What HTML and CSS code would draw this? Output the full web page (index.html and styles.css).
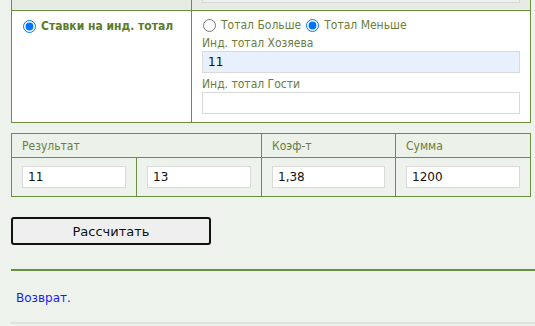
FILE: index.html
```html
<!DOCTYPE html>
<html lang="ru">
<head>
    <meta charset="UTF-8">
    <title>Калькулятор</title>
    <link rel="stylesheet" href="styles.css">
</head>
<body>
    <div class="page">
        <table class="bets">
            <tr class="top-row">
                <td class="left-col"></td>
                <td><div class="cut-input"></div></td>
            </tr>
            <tr>
                <td class="left-col">
                    <label class="title"><input type="radio" name="mode" checked> Ставки на инд. тотал</label>
                </td>
                <td class="right-col">
                    <div class="radios">
                        <label><input type="radio" name="tot"> Тотал Больше</label>
                        <label><input type="radio" name="tot" checked> Тотал Меньше</label>
                    </div>
                    <div class="field-label">Инд. тотал Хозяева</div>
                    <input type="text" class="field autofill" value="11">
                    <div class="field-label">Инд. тотал Гости</div>
                    <input type="text" class="field" value="">
                </td>
            </tr>
        </table>

        <table class="result">
            <tr class="head">
                <td colspan="2">Результат</td>
                <td>Коэф-т</td>
                <td>Сумма</td>
            </tr>
            <tr>
                <td class="c1"><input type="text" class="field" value="11"></td>
                <td class="c2"><input type="text" class="field" value="13"></td>
                <td class="c3"><input type="text" class="field" value="1,38"></td>
                <td class="c4"><input type="text" class="field" value="1200"></td>
            </tr>
        </table>

        <button class="calc">Рассчитать</button>

        <div class="footer">
            <a href="#">Возврат.</a>
        </div>
    </div>
</body>
</html>
```

FILE: styles.css
```css
body {
    margin: 0;
    background-color: #eef2ec;
    font-family: "DejaVu Sans Condensed", "DejaVu Sans", Verdana, sans-serif;
    font-size: 12px;
    color: #6b7d3c;
}
.page {
    width: 520px;
    margin-left: 11px;
}
table {
    border-collapse: collapse;
    width: 520px;
}
td {
    border: 1px solid #6a8f3e;
    padding: 0;
    vertical-align: top;
}
.bets {
    background-color: #fff;
}
.top-row td {
    height: 10px;
    background-color: #e6ebe4;
    border-top: none;
}
.cut-input {
    margin: 0 10px 0 10px;
    height: 2px;
    border: 1px solid #d8d8d8;
    border-top: none;
    background-color: #eef0ee;
}
.left-col {
    width: 179px;
}
.left-col .title {
    display: flex;
    align-items: center;
    margin: 8px 0 0 10px;
    font-weight: bold;
    color: #5c7a2b;
}
input[type="radio"] {
    margin: 0 5px 0 1px;
    width: 13px;
    height: 13px;
}
.right-col {
    padding: 7px 10px 8px 10px;
}
.radios {
    display: flex;
    gap: 4px;
}
.radios label {
    display: flex;
    align-items: center;
}
.field-label {
    margin-top: 4px;
    height: 15px;
}
.field {
    display: block;
    box-sizing: border-box;
    width: 100%;
    height: 22px;
    border: 1px solid #dadada;
    padding: 0 5px;
    font-family: "DejaVu Sans", Verdana, sans-serif;
    font-size: 12px;
    color: #111;
    background-color: #fff;
}
.field.autofill {
    background-color: #e8f0fe;
}
.result {
    margin-top: 10px;
}
.result td {
    padding: 8px 10px;
}
.result .head td {
    height: 23px;
    vertical-align: middle;
    padding: 0 10px;
    background-color: #ecf1ea;
}
.result .c1, .result .c2 {
    width: 104px;
}
.result .c3 {
    width: 113px;
}
.calc {
    display: block;
    margin-top: 20px;
    width: 200px;
    height: 28px;
    border: 2px solid #111;
    border-radius: 3px;
    background-color: #efefef;
    font-family: "DejaVu Sans", Verdana, sans-serif;
    font-size: 13px;
    color: #111;
}
.footer {
    margin-top: 24px;
    border-top: 2px solid #66903e;
    border-bottom: 2px solid #dfe2de;
    padding: 20px 5px 17px 5px;
    width: 515px;
}
.footer a {
    color: #1a1aff;
    text-decoration: none;
    font-family: "DejaVu Sans", Verdana, sans-serif;
    font-size: 12px;
}
```
